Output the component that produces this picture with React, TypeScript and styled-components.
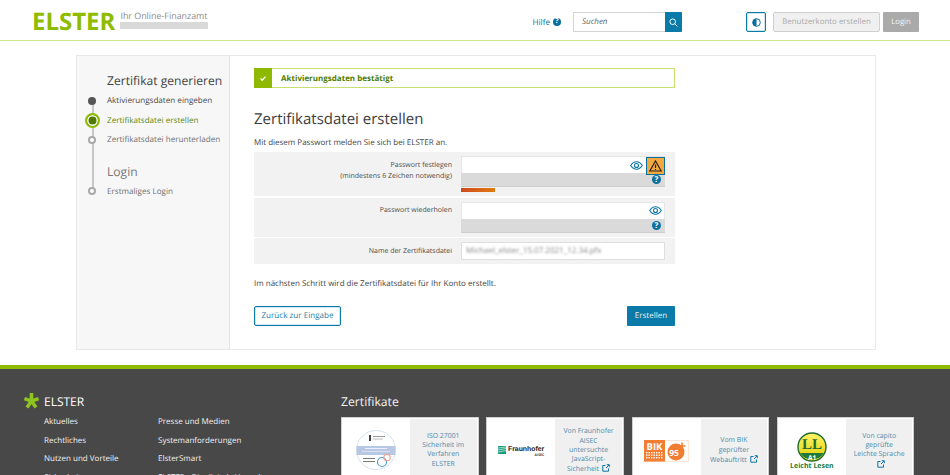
import React from 'react';
import styled, { createGlobalStyle } from 'styled-components';

const Global = createGlobalStyle`
  html, body { margin: 0; padding: 0; width: 950px; height: 475px; overflow: hidden; background: #fff; }
  body {
    font-family: "Open Sans", "Liberation Sans", sans-serif;
    font-size: 8px;
    color: #444;
    text-rendering: geometricPrecision;
  }
  * { box-sizing: border-box; }
`;

const Page = styled.div`
  width: 950px;
  height: 475px;
  overflow: hidden;
  display: flex;
  flex-direction: column;
`;

const Header = styled.header`
  height: 41px;
  flex: none;
  border-bottom: 1px solid #cfe58a;
  padding: 12px 31px 0 32px;
  display: flex;
  align-items: flex-start;
`;
const Logo = styled.div`
  font-size: 24px;
  font-weight: 700;
  line-height: 20px;
  height: 20px;
  color: #8fbc00;
`;
const Tagline = styled.div`
  margin: -1px 0 0 5px;
  width: 88px;
  display: flex;
  flex-direction: column;
  font-size: 8.9px;
  line-height: 10px;
  color: #8c8c8c;
  white-space: nowrap;
`;
const TagBar = styled.div`
  height: 7px;
  margin-top: 1px;
  background: #d9d9d9;
`;
const HeaderRight = styled.div`
  margin-left: auto;
  display: flex;
  align-items: center;
  height: 20px;
`;
const Help = styled.a`
  display: flex;
  align-items: center;
  gap: 3px;
  font-size: 8.2px;
  color: #0b75a5;
  margin-right: 12px;
`;
const HelpDot = styled.span<{ $size?: number }>`
  width: ${(p) => p.$size ?? 8}px;
  height: ${(p) => p.$size ?? 8}px;
  border-radius: 50%;
  background: #0b6fa0;
  color: #fff;
  font-size: ${(p) => (p.$size ?? 8) - 1}px;
  font-weight: 700;
  line-height: ${(p) => p.$size ?? 8}px;
  text-align: center;
  display: block;
  flex: none;
`;
const Search = styled.div`
  width: 109px;
  height: 20px;
  display: flex;
  margin-right: 64px;
`;
const SearchInput = styled.div`
  flex: 1;
  border: 1px solid #d4d4d4;
  border-right: none;
  border-radius: 1px 0 0 1px;
  padding-left: 8px;
  font-size: 8px;
  font-style: italic;
  line-height: 18px;
  color: #666;
`;
const SearchButton = styled.div`
  width: 17px;
  background: #0a7aa8;
  border-radius: 0 1px 1px 0;
  display: flex;
  align-items: center;
  justify-content: center;
`;
const ContrastButton = styled.div`
  width: 20px;
  height: 20px;
  border: 1px solid #0a7aa8;
  border-radius: 2px;
  box-shadow: inset 0 0 0 1px #cfe4ee;
  display: flex;
  align-items: center;
  justify-content: center;
  margin-right: 7px;
`;
const RegisterButton = styled.div`
  width: 107px;
  height: 20px;
  background: #f0f0f0;
  border: 1px solid #d0d0d0;
  border-radius: 2px;
  font-size: 7.9px;
  line-height: 18px;
  text-align: center;
  color: #aaa;
  margin-right: 3px;
`;
const LoginButton = styled.div`
  width: 36px;
  height: 20px;
  background: #aaa;
  border-radius: 1px;
  font-size: 7.8px;
  line-height: 20px;
  text-align: center;
  color: #f4f4f4;
`;

const Main = styled.main`
  flex: none;
  height: 324px;
  padding: 14px 74px 0 76px;
`;
const Card = styled.div`
  height: 295px;
  border: 1px solid #e8e8e8;
  display: flex;
`;
const Sidebar = styled.aside`
  width: 153px;
  flex: none;
  background: #f7f7f7;
  border-right: 1px solid #e4e4e4;
  padding-top: 16px;
  position: relative;
`;
const TimelineLine = styled.div`
  position: absolute;
  left: 14.5px;
  top: 44px;
  height: 91px;
  width: 2px;
  background: #c8c8c8;
`;
const SideHeading = styled.div<{ $muted?: boolean }>`
  margin-left: 30px;
  font-size: 12.1px;
  line-height: 18px;
  height: 18px;
  color: ${(p) => (p.$muted ? '#777' : '#444')};
  white-space: nowrap;
`;
const Step = styled.div`
  height: 19.5px;
  display: flex;
  align-items: center;
  position: relative;
  white-space: nowrap;
`;
const StepMarker = styled.div`
  width: 30px;
  flex: none;
  display: flex;
  justify-content: center;
  position: relative;
  z-index: 1;
`;
const Dot = styled.span<{ $kind: 'done' | 'active' | 'open' }>`
  display: block;
  border-radius: 50%;
  ${(p) =>
    p.$kind === 'done'
      ? 'width:8px;height:8px;background:#555;'
      : p.$kind === 'active'
      ? 'width:15px;height:15px;background:#4f7c00;border:2px solid #8fbc00;box-shadow:inset 0 0 0 1.5px #fff;'
      : 'width:8px;height:8px;background:#fff;border:2px solid #a8a8a8;'}
`;
const StepLabel = styled.span<{ $kind: 'done' | 'active' | 'open' }>`
  font-size: 8.1px;
  color: ${(p) => (p.$kind === 'done' ? '#4a4a4a' : p.$kind === 'active' ? '#5f8a10' : '#707070')};
`;
const Steps = styled.div`
  margin-top: 1px;
`;
const LoginGroup = styled.div`
  margin-top: 13px;
`;

const Content = styled.section`
  width: 421px;
  margin-left: 24px;
  padding-top: 12px;
  display: flex;
  flex-direction: column;
`;
const Banner = styled.div`
  height: 20px;
  border: 1px solid #c8e070;
  display: flex;
  align-items: center;
`;
const BannerIcon = styled.div`
  width: 18px;
  height: 20px;
  margin-left: -1px;
  background: #8fb900;
  display: flex;
  align-items: center;
  justify-content: center;
`;
const BannerText = styled.span`
  margin-left: 9px;
  font-size: 8px;
  font-weight: 700;
  color: #4f7c00;
`;
const Title = styled.h1`
  margin: 21px 0 0;
  font-size: 15px;
  line-height: 20px;
  font-weight: 400;
  color: #3d3d3d;
`;
const Intro = styled.p`
  margin: 8px 0 3px;
  font-size: 8px;
  line-height: 12px;
  color: #444;
  white-space: nowrap;
`;
const FormRow = styled.div<{ $h: number }>`
  height: ${(p) => p.$h}px;
  background: #f2f2f2;
  display: flex;
  padding: 4px 10px 0 0;
  margin-bottom: 1.5px;
`;
const FieldLabel = styled.div`
  width: 198px;
  flex: none;
  text-align: right;
  font-size: 7px;
  line-height: 11px;
  padding-top: 3.5px;
  color: #4d4d4d;
`;
const FieldColumn = styled.div`
  margin-left: 9px;
  flex: 1;
  display: flex;
  flex-direction: column;
`;
const PasswordInput = styled.div`
  height: 17px;
  background: #fff;
  border: 1px solid #e6e6e6;
  border-bottom: none;
  display: flex;
  align-items: center;
  justify-content: flex-end;
  padding-right: 2px;
  position: relative;
`;
const EyeSlot = styled.span<{ $shift?: number }>`
  display: flex;
  margin-right: ${(p) => p.$shift ?? 0}px;
`;
const Warning = styled.div`
  position: absolute;
  right: -1px;
  top: 0;
  width: 19px;
  height: 18px;
  background: #f2a93f;
  border: 1px solid #0a6e9e;
  display: flex;
  align-items: center;
  justify-content: center;
  z-index: 1;
`;
const Strip = styled.div`
  height: 14px;
  background: #dadada;
  display: flex;
  align-items: center;
  justify-content: flex-end;
  padding-right: 4px;
  border-bottom: 1px solid #cfcfcf;
`;
const StrengthTrack = styled.div`
  height: 4px;
  margin-top: 1px;
`;
const StrengthBar = styled.div`
  height: 100%;
  background: linear-gradient(90deg, #cf4a1e, #e07a10);
`;
const NameInput = styled.div`
  height: 18px;
  background: #fff;
  border: 1px solid #dedede;
  padding-left: 4px;
  font-size: 8px;
  line-height: 16px;
  color: #888;
`;
const Blurred = styled.span`
  filter: blur(1.1px);
  display: inline-block;
`;
const NextText = styled.p`
  margin: 12.5px 0 0;
  font-size: 8px;
  line-height: 12px;
  color: #444;
  white-space: nowrap;
`;
const Actions = styled.div`
  margin-top: 16px;
  display: flex;
  justify-content: space-between;
`;
const SecondaryButton = styled.div`
  width: 87px;
  height: 20px;
  border: 1px solid #0a7aa8;
  border-radius: 2px;
  box-shadow: inset 0 0 0 1px #d4e8f1;
  font-size: 8.1px;
  line-height: 18px;
  text-align: center;
  color: #2a7fa8;
`;
const PrimaryButton = styled.div`
  width: 48px;
  height: 20px;
  background: #0a7aa8;
  border-radius: 1px;
  font-size: 8px;
  line-height: 20px;
  text-align: center;
  color: #f2f2f2;
`;

const Footer = styled.footer`
  flex: none;
  height: 140px;
  border-top: 4px solid #8fbc00;
  background: #484848;
  padding: 23px 35px 0 24px;
  display: flex;
  overflow: hidden;
`;
const FooterNav = styled.div`
  width: 317px;
  flex: none;
`;
const BrandRow = styled.div`
  display: flex;
  align-items: center;
  height: 18px;
  color: #fff;
  font-size: 12px;
`;
const NavGrid = styled.div`
  margin: 3px 0 0 20px;
  display: grid;
  grid-template-columns: 114px 1fr;
  grid-auto-rows: 18.5px;
  font-size: 8px;
  line-height: 18.5px;
  color: #f2f2f2;
  white-space: nowrap;
`;
const Certs = styled.div`
  flex: 1;
`;
const CertHeading = styled.div`
  height: 18px;
  line-height: 19px;
  font-size: 12.2px;
  color: #f2f2f2;
`;
const CertRow = styled.div`
  margin-top: 7px;
  display: grid;
  grid-template-columns: repeat(4, 137.5px);
  column-gap: 7.8px;
`;
const CertCard = styled.div`
  height: 80px;
  background: #fff;
  border: 1px solid #cfcfcf;
  display: flex;
`;
const CertLogo = styled.div`
  width: 68px;
  flex: none;
  display: flex;
  flex-direction: column;
  align-items: center;
  justify-content: flex-start;
`;
const CertText = styled.div<{ $top: number }>`
  flex: 1;
  background: #f0f0f0;
  margin: 1px 1px 0 0;
  padding-top: ${(p) => p.$top}px;
  text-align: center;
  font-size: 6.9px;
  line-height: 9.2px;
  color: #4f8aab;
  white-space: nowrap;
`;
const FraunhoferWrap = styled.div`
  margin-top: 27px;
  display: flex;
  flex-direction: column;
  align-items: flex-end;
  width: 46px;
`;
const FraunhoferMain = styled.div`
  display: flex;
  align-items: center;
  gap: 2px;
  font-size: 6.9px;
  line-height: 9px;
  font-weight: 700;
  color: #222;
  font-family: "Liberation Sans", sans-serif;
`;
const FraunhoferSub = styled.div`
  font-size: 3.5px;
  line-height: 4px;
  font-weight: 700;
  color: #444;
`;
const LeichtLesen = styled.div`
  font-size: 7px;
  line-height: 8px;
  margin-top: 1px;
  font-weight: 700;
  color: #1f7a3a;
  white-space: nowrap;
`;
const LogoSlot = styled.div<{ $top: number }>`
  margin-top: ${(p) => p.$top}px;
  display: flex;
`;

const EyeIcon = () => (
  <svg width="13" height="9" viewBox="0 0 13 9" fill="none" stroke="#0b75a5" strokeWidth="1.1">
    <path d="M.7 4.500C2.300 2 4.200.8 6.500.8s4.200 1.200 5.800 3.700c-1.600 2.500-3.500 3.700-5.800 3.700S2.300 7 .7 4.500z" />
    <circle cx="6.500" cy="4.500" r="2" />
  </svg>
);
const ExternalSvg = styled.svg`
  vertical-align: -1px;
  margin-left: 3px;
`;
const ExternalIcon = () => (
  <ExternalSvg width="8" height="8" viewBox="0 0 8 8" fill="none" stroke="#0b75a5" strokeWidth="1">
    <path d="M3.500 1.500H.8v5.700h5.700V4.500M4 4l3-3M4.800.7h2.500v2.500" />
  </ExternalSvg>
);

const Seal = () => (
  <svg width="40" height="40" viewBox="0 0 40 40">
    <circle cx="20" cy="20" r="19.500" fill="#fff" stroke="#d5e2ee" />
    <rect x="13" y="5" width="2" height="6" fill="#444" />
    <rect x="17" y="6" width="12" height="1" fill="#999" />
    <rect x="17" y="8.500" width="10" height="1" fill="#bbb" />
    <rect x=".6" y="16" width="38.800" height="9" fill="#b6c8e4" />
    <rect x="9" y="18" width="22" height="1" fill="#eef" />
    <rect x="6" y="21" width="28" height="1" fill="#dde" />
    <rect x="7" y="28" width="12" height="1" fill="#777" />
    <rect x="7" y="31" width="12" height="1" fill="#777" />
    <circle cx="26" cy="32" r="4.500" fill="none" stroke="#4aa0d0" strokeWidth="1.200" />
    <circle cx="31" cy="27.500" r="3.200" fill="none" stroke="#f0a090" strokeWidth="1.200" />
  </svg>
);
const FhMark = () => (
  <svg width="8" height="8" viewBox="0 0 8 8">
    <rect width="8" height="8" fill="#179c7d" />
    <path d="M0 2l8-1M0 4l8-1.500M0 6l8-1.500" stroke="#fff" strokeWidth=".6" />
  </svg>
);
const Bik = () => (
  <svg width="45" height="22" viewBox="0 0 45 22">
    <rect x=".5" y=".5" width="44" height="21" fill="#fff" stroke="#fde3d5" />
    <rect x="0" y="0" width="21" height="21.500" fill="#f07d32" />
    <text x="10.500" y="10" textAnchor="middle" fontSize="9.500" fontWeight="700" fill="#fff" fontFamily="Open Sans">BIK</text>
    {[12, 14.5, 17].map((y) =>
      [2, 4.5, 7, 9.5, 12, 14.5, 17].map((x) => <rect key={`${x}-${y}`} x={x} y={y} width="1.400" height="1.400" fill="#fff" />)
    )}
    <circle cx="32" cy="12" r="8.500" fill="#f07d32" />
    <text x="30" y="16" textAnchor="middle" fontSize="8.500" fontWeight="700" fill="#fff" fontFamily="Open Sans">95</text>
    <path d="M38 2.500v7M34.500 6h7" stroke="#f07d32" strokeWidth="1.600" />
  </svg>
);
const LlBadge = () => (
  <svg width="30" height="30" viewBox="0 0 30 30">
    <defs>
      <linearGradient id="llg" x1="0" y1="0" x2="0" y2="1">
        <stop offset="0" stopColor="#fff36a" />
        <stop offset="1" stopColor="#e0d000" />
      </linearGradient>
    </defs>
    <circle cx="15" cy="15" r="14" fill="url(#llg)" stroke="#1f6b33" strokeWidth="1.400" />
    <path d="M3.200 21h23.600A14 14 0 0 1 3.200 21z" fill="#1f7a3a" />
    <text x="15" y="17" textAnchor="middle" fontSize="15" fontWeight="700" fill="#1f6b33" fontFamily="Liberation Serif">LL</text>
    <text x="15" y="27.500" textAnchor="middle" fontSize="6.500" fontWeight="700" fill="#fff" fontFamily="Open Sans">A1</text>
  </svg>
);
const Star = () => (
  <svg width="20" height="18" viewBox="0 0 20 18" fill="none" stroke="#8fc31f" strokeWidth="3.600">
    <path d="M7.500 9V1M7.500 9L.4 6.600M7.500 9l7.100-2.400M7.500 9L3 15.600M7.500 9l4.500 6.600" />
  </svg>
);

export default function App() {
  return (
    <Page>
      <Global />
      <Header>
        <Logo>ELSTER</Logo>
        <Tagline>
          <span>Ihr Online-Finanzamt</span>
          <TagBar />
        </Tagline>
        <HeaderRight>
          <Help>
            Hilfe <HelpDot>?</HelpDot>
          </Help>
          <Search>
            <SearchInput>Suchen</SearchInput>
            <SearchButton>
              <svg width="9" height="9" viewBox="0 0 9 9" fill="none" stroke="#fff" strokeWidth="1">
                <circle cx="3.700" cy="3.700" r="2.800" />
                <path d="M5.800 5.800L8.400 8.400" />
              </svg>
            </SearchButton>
          </Search>
          <ContrastButton>
            <svg width="9" height="9" viewBox="0 0 9 9">
              <circle cx="4.500" cy="4.500" r="3.800" fill="#fff" stroke="#0a6e9e" />
              <path d="M4.500.7a3.800 3.800 0 0 0 0 7.600z" fill="#0a6e9e" />
            </svg>
          </ContrastButton>
          <RegisterButton>Benutzerkonto erstellen</RegisterButton>
          <LoginButton>Login</LoginButton>
        </HeaderRight>
      </Header>

      <Main>
        <Card>
          <Sidebar>
            <TimelineLine />
            <SideHeading>Zertifikat generieren</SideHeading>
            <Steps>
              <Step>
                <StepMarker><Dot $kind="done" /></StepMarker>
                <StepLabel $kind="done">Aktivierungsdaten eingeben</StepLabel>
              </Step>
              <Step>
                <StepMarker><Dot $kind="active" /></StepMarker>
                <StepLabel $kind="active">Zertifikatsdatei erstellen</StepLabel>
              </Step>
              <Step>
                <StepMarker><Dot $kind="open" /></StepMarker>
                <StepLabel $kind="open">Zertifikatsdatei herunterladen</StepLabel>
              </Step>
            </Steps>
            <LoginGroup>
              <SideHeading $muted>Login</SideHeading>
              <Steps>
                <Step>
                  <StepMarker><Dot $kind="open" /></StepMarker>
                  <StepLabel $kind="open">Erstmaliges Login</StepLabel>
                </Step>
              </Steps>
            </LoginGroup>
          </Sidebar>
          <Content>
            <Banner>
              <BannerIcon>
                <svg width="6" height="5" viewBox="0 0 6 5" fill="none" stroke="#fff" strokeWidth="1.400">
                  <path d="M.5 2.500l1.700 1.700L5.500.6" />
                </svg>
              </BannerIcon>
              <BannerText>Aktivierungsdaten bestätigt</BannerText>
            </Banner>
            <Title>Zertifikatsdatei erstellen</Title>
            <Intro>Mit diesem Passwort melden Sie sich bei ELSTER an.</Intro>
            <FormRow $h={44}>
              <FieldLabel>
                Passwort festlegen
                <br />
                (mindestens 6 Zeichen notwendig)
              </FieldLabel>
              <FieldColumn>
                <PasswordInput>
                  <EyeSlot $shift={19}><EyeIcon /></EyeSlot>
                  <Warning>
                    <svg width="13" height="12" viewBox="0 0 13 12" fill="none" stroke="#2a2010" strokeWidth="1.200">
                      <path d="M6.500 1L12.200 11H.8z" />
                      <path d="M6.500 4.500v3.500M6.500 9v1" />
                    </svg>
                  </Warning>
                </PasswordInput>
                <Strip><HelpDot $size={9}>?</HelpDot></Strip>
                <StrengthTrack><StrengthBar style={{ width: 34 }} /></StrengthTrack>
              </FieldColumn>
            </FormRow>
            <FormRow $h={39}>
              <FieldLabel>Passwort wiederholen</FieldLabel>
              <FieldColumn>
                <PasswordInput><EyeSlot><EyeIcon /></EyeSlot></PasswordInput>
                <Strip><HelpDot $size={9}>?</HelpDot></Strip>
              </FieldColumn>
            </FormRow>
            <FormRow $h={26}>
              <FieldLabel>Name der Zertifikatsdatei</FieldLabel>
              <FieldColumn>
                <NameInput><Blurred>Michael_elster_15.07.2021_12.34.pfx</Blurred></NameInput>
              </FieldColumn>
            </FormRow>
            <NextText>Im nächsten Schritt wird die Zertifikatsdatei für Ihr Konto erstellt.</NextText>
            <Actions>
              <SecondaryButton>Zurück zur Eingabe</SecondaryButton>
              <PrimaryButton>Erstellen</PrimaryButton>
            </Actions>
          </Content>
        </Card>
      </Main>

      <Footer>
        <FooterNav>
          <BrandRow>
            <Star />
            <span>ELSTER</span>
          </BrandRow>
          <NavGrid>
            <span>Aktuelles</span><span>Presse und Medien</span>
            <span>Rechtliches</span><span>Systemanforderungen</span>
            <span>Nutzen und Vorteile</span><span>ElsterSmart</span>
            <span>Sicherheit</span><span>ELSTER - Die digitale Verwaltung</span>
          </NavGrid>
        </FooterNav>
        <Certs>
          <CertHeading>Zertifikate</CertHeading>
          <CertRow>
            <CertCard>
              <CertLogo><LogoSlot $top={12}><Seal /></LogoSlot></CertLogo>
              <CertText $top={13}>ISO 27001<br />Sicherheit im<br />Verfahren<br />ELSTER</CertText>
            </CertCard>
            <CertCard>
              <CertLogo>
                <FraunhoferWrap>
                  <FraunhoferMain><FhMark />Fraunhofer</FraunhoferMain>
                  <FraunhoferSub>AISEC</FraunhoferSub>
                </FraunhoferWrap>
              </CertLogo>
              <CertText $top={8.4}>Von Fraunhofer<br />AISEC<br />untersuchte<br />JavaScript-<br />Sicherheit<ExternalIcon /></CertText>
            </CertCard>
            <CertCard>
              <CertLogo><LogoSlot $top={22}><Bik /></LogoSlot></CertLogo>
              <CertText $top={17.4}>Vom BIK<br />geprüfter<br />Webauftritt<ExternalIcon /></CertText>
            </CertCard>
            <CertCard>
              <CertLogo>
                <LogoSlot $top={14}><LlBadge /></LogoSlot>
                <LeichtLesen>Leicht Lesen</LeichtLesen>
              </CertLogo>
              <CertText $top={13}>Von capito<br />geprüfte<br />Leichte Sprache<br /><ExternalIcon /></CertText>
            </CertCard>
          </CertRow>
        </Certs>
      </Footer>
    </Page>
  );
}
